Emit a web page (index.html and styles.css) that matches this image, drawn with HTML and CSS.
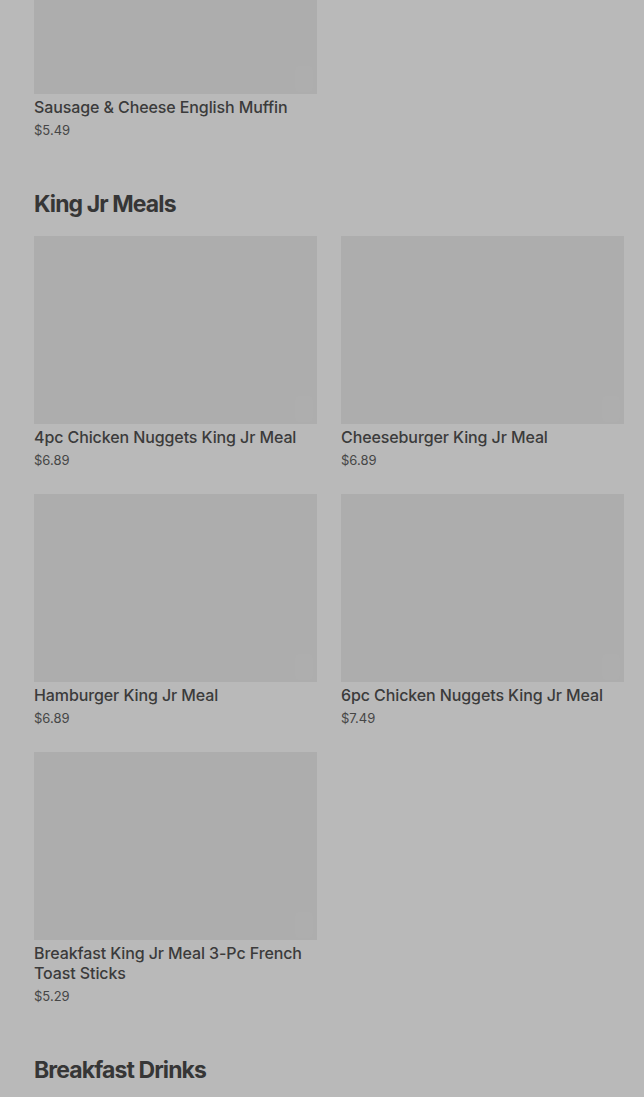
FILE: index.html
```html
<!DOCTYPE html>
<html lang="en">

<head>
    <meta charset="UTF-8">
    <meta name="viewport" content="width=device-width, initial-scale=1.0">
    <title>Menu</title>
    <link rel="stylesheet" href="styles.css">
</head>

<body>
    <div class="menu">
        <div class="section">
            <div class="item-grid">
                <div class="item">
                    <div class="item-image"><span class="add"></span></div>
                    <div class="item-name">Sausage &amp; Cheese English Muffin</div>
                    <div class="item-price">$5.49</div>
                </div>
            </div>
        </div>

        <div class="section">
            <div class="section-title">King Jr Meals</div>
            <div class="item-grid">
                <div class="item">
                    <div class="item-image"><span class="add"></span></div>
                    <div class="item-name">4pc Chicken Nuggets King Jr Meal</div>
                    <div class="item-price">$6.89</div>
                </div>
                <div class="item">
                    <div class="item-image"><span class="add"></span></div>
                    <div class="item-name">Cheeseburger King Jr Meal</div>
                    <div class="item-price">$6.89</div>
                </div>
                <div class="item">
                    <div class="item-image"><span class="add"></span></div>
                    <div class="item-name">Hamburger King Jr Meal</div>
                    <div class="item-price">$6.89</div>
                </div>
                <div class="item">
                    <div class="item-image"><span class="add"></span></div>
                    <div class="item-name">6pc Chicken Nuggets King Jr Meal</div>
                    <div class="item-price">$7.49</div>
                </div>
                <div class="item">
                    <div class="item-image"><span class="add"></span></div>
                    <div class="item-name">Breakfast King Jr Meal 3-Pc French Toast Sticks</div>
                    <div class="item-price">$5.29</div>
                </div>
            </div>
        </div>

        <div class="section">
            <div class="section-title">Breakfast Drinks</div>
            <div class="item-grid">
                <div class="item">
                    <div class="item-image"><span class="add"></span></div>
                </div>
                <div class="item">
                    <div class="item-image"><span class="add"></span></div>
                </div>
            </div>
        </div>
    </div>
</body>

</html>
```

FILE: styles.css
```css
body {
    margin: 0;
    background-color: #b9b9b9;
    font-family: 'Inter', 'Noto Sans', sans-serif;
    color: #3b3b3b;
    overflow: hidden;
}

.menu {
    display: flex;
    flex-direction: column;
    gap: 48px;
    padding: 0 20px 0 34px;
    margin-top: -94px;
}

.section-title {
    font-size: 23px;
    line-height: 32px;
    font-weight: 700;
    letter-spacing: -0.9px;
    color: #363636;
    margin-bottom: 16px;
}

.item-grid {
    display: grid;
    grid-template-columns: 1fr 1fr;
    column-gap: 24px;
    row-gap: 24px;
}

.item-image {
    position: relative;
    height: 188px;
    background-color: #adadad;
}

.add {
    position: absolute;
    right: 4px;
    bottom: 2px;
    width: 18px;
    height: 26px;
    border-radius: 4px;
    background-color: #aeaeae;
}

.item-name {
    margin-top: 3px;
    font-size: 16px;
    line-height: 20px;
    font-weight: 500;
    letter-spacing: -0.1px;
    color: #3b3b3b;
}

.item-price {
    margin-top: 3px;
    font-size: 13px;
    line-height: 20px;
    color: #464646;
}
```
